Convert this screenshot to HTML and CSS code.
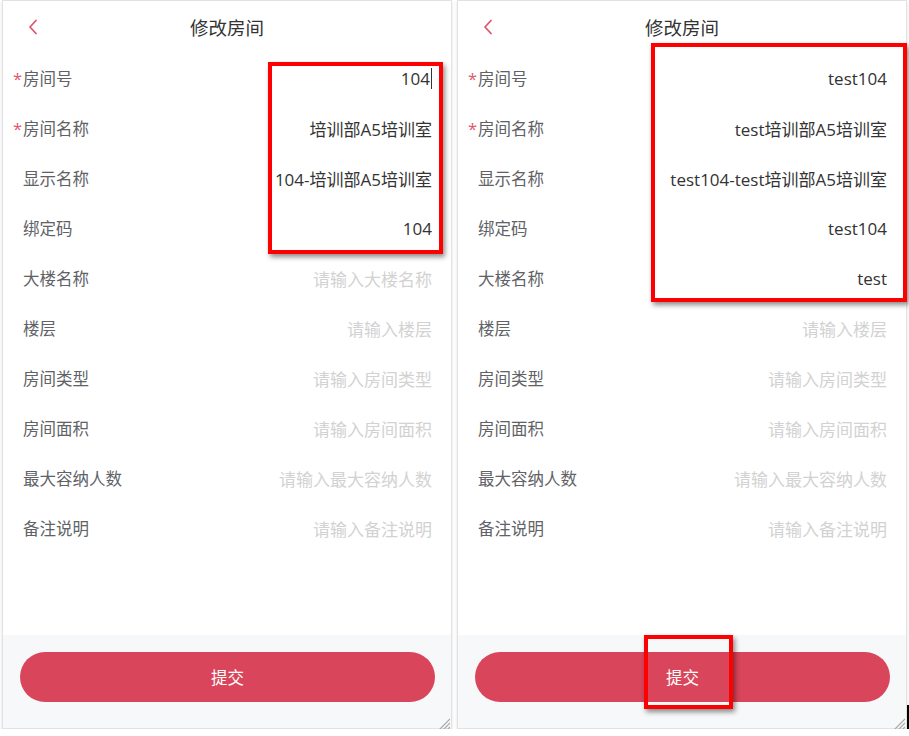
FILE: index.html
```html
<!DOCTYPE html>
<html lang="zh-CN">
<head>
    <meta charset="UTF-8">
    <meta name="viewport" content="width=device-width, initial-scale=1.0">
    <title>修改房间</title>
    <link rel="stylesheet" href="styles.css">
</head>
<body>
    <div class="screens">
        <!-- 编辑前 -->
        <section class="phone">
            <header class="nav-bar">
                <span class="nav-back">
                    <svg width="10" height="16" viewBox="0 0 10 16"><polyline points="8,1.5 2,8 8,14.5" fill="none" stroke="#e0566b" stroke-width="1.8" stroke-linecap="round" stroke-linejoin="round"/></svg>
                </span>
                <h1 class="nav-title">修改房间</h1>
                <span></span>
            </header>
            <div class="form">
                <div class="field">
                    <label class="field-label"><span class="req">*</span>房间号</label>
                    <div class="field-value">104<span class="caret"></span></div>
                </div>
                <div class="field">
                    <label class="field-label"><span class="req">*</span>房间名称</label>
                    <div class="field-value">培训部A5培训室</div>
                </div>
                <div class="field">
                    <label class="field-label"><span class="req"></span>显示名称</label>
                    <div class="field-value">104-培训部A5培训室</div>
                </div>
                <div class="field">
                    <label class="field-label"><span class="req"></span>绑定码</label>
                    <div class="field-value">104</div>
                </div>
                <div class="field">
                    <label class="field-label"><span class="req"></span>大楼名称</label>
                    <div class="field-value empty">请输入大楼名称</div>
                </div>
                <div class="field">
                    <label class="field-label"><span class="req"></span>楼层</label>
                    <div class="field-value empty">请输入楼层</div>
                </div>
                <div class="field">
                    <label class="field-label"><span class="req"></span>房间类型</label>
                    <div class="field-value empty">请输入房间类型</div>
                </div>
                <div class="field">
                    <label class="field-label"><span class="req"></span>房间面积</label>
                    <div class="field-value empty">请输入房间面积</div>
                </div>
                <div class="field">
                    <label class="field-label"><span class="req"></span>最大容纳人数</label>
                    <div class="field-value empty">请输入最大容纳人数</div>
                </div>
                <div class="field">
                    <label class="field-label"><span class="req"></span>备注说明</label>
                    <div class="field-value empty">请输入备注说明</div>
                </div>
            </div>
            <footer class="submit-bar">
                <button class="submit-btn">提交</button>
            </footer>
            <span class="resize-grip">
                <svg width="13" height="13" viewBox="0 0 13 13"><path d="M13 1L1 13M13 5L5 13M13 9L9 13" stroke="#a8a8a8" stroke-width="1.2"/></svg>
            </span>
            <div class="mark mark-values"></div>
        </section>

        <!-- 编辑后 -->
        <section class="phone">
            <header class="nav-bar">
                <span class="nav-back">
                    <svg width="10" height="16" viewBox="0 0 10 16"><polyline points="8,1.5 2,8 8,14.5" fill="none" stroke="#e0566b" stroke-width="1.8" stroke-linecap="round" stroke-linejoin="round"/></svg>
                </span>
                <h1 class="nav-title">修改房间</h1>
                <span></span>
            </header>
            <div class="form">
                <div class="field">
                    <label class="field-label"><span class="req">*</span>房间号</label>
                    <div class="field-value">test104</div>
                </div>
                <div class="field">
                    <label class="field-label"><span class="req">*</span>房间名称</label>
                    <div class="field-value">test培训部A5培训室</div>
                </div>
                <div class="field">
                    <label class="field-label"><span class="req"></span>显示名称</label>
                    <div class="field-value">test104-test培训部A5培训室</div>
                </div>
                <div class="field">
                    <label class="field-label"><span class="req"></span>绑定码</label>
                    <div class="field-value">test104</div>
                </div>
                <div class="field">
                    <label class="field-label"><span class="req"></span>大楼名称</label>
                    <div class="field-value">test</div>
                </div>
                <div class="field">
                    <label class="field-label"><span class="req"></span>楼层</label>
                    <div class="field-value empty">请输入楼层</div>
                </div>
                <div class="field">
                    <label class="field-label"><span class="req"></span>房间类型</label>
                    <div class="field-value empty">请输入房间类型</div>
                </div>
                <div class="field">
                    <label class="field-label"><span class="req"></span>房间面积</label>
                    <div class="field-value empty">请输入房间面积</div>
                </div>
                <div class="field">
                    <label class="field-label"><span class="req"></span>最大容纳人数</label>
                    <div class="field-value empty">请输入最大容纳人数</div>
                </div>
                <div class="field">
                    <label class="field-label"><span class="req"></span>备注说明</label>
                    <div class="field-value empty">请输入备注说明</div>
                </div>
            </div>
            <footer class="submit-bar">
                <button class="submit-btn">提交</button>
            </footer>
            <span class="resize-grip">
                <svg width="13" height="13" viewBox="0 0 13 13"><path d="M13 1L1 13M13 5L5 13M13 9L9 13" stroke="#a8a8a8" stroke-width="1.2"/></svg>
            </span>
            <div class="mark mark-fields"></div>
            <div class="mark mark-submit"></div>
            <span class="pointer-line"></span>
        </section>
    </div>
</body>
</html>
```

FILE: styles.css
```css
body {
    margin: 0;
    background-color: #ffffff;
    font-family: "Open Sans", "Noto Sans CJK SC", sans-serif;
    color: #333;
}
.screens {
    display: flex;
    gap: 5px;
    padding-left: 2px;
}
.phone {
    position: relative;
    width: 450px;
    height: 729px;
    box-sizing: border-box;
    border: 1px solid #e2e2e2;
    box-shadow: 0 2px 3px rgba(0, 0, 0, 0.12);
    background-color: #fff;
    display: flex;
    flex-direction: column;
}

/* 顶部导航 */
.nav-bar {
    height: 52px;
    display: grid;
    grid-template-columns: 1fr auto 1fr;
    align-items: center;
}
.nav-back {
    padding-left: 25px;
    display: flex;
    align-items: center;
}
.nav-title {
    margin: 0;
    font-size: 18.5px;
    font-weight: 400;
    color: #333;
    font-family: "Noto Sans CJK SC", sans-serif;
}

/* 表单 */
.form {
    flex: 1;
}
.field {
    height: 50px;
    display: flex;
    align-items: center;
    justify-content: space-between;
    padding: 0 19px 0 10px;
    font-size: 16.5px;
}
.field-label {
    display: flex;
    align-items: center;
    color: #606266;
    white-space: nowrap;
}
.req {
    display: inline-block;
    width: 10px;
    color: #e0566b;
}
.field-value {
    display: flex;
    align-items: center;
    font-size: 17px;
    color: #333;
    white-space: nowrap;
}
.field-value.empty {
    color: #d2d2d2;
}
.caret {
    display: inline-block;
    width: 1px;
    height: 21px;
    margin-left: 1px;
    background-color: #333;
}

/* 底部提交 */
.submit-bar {
    height: 93px;
    box-sizing: border-box;
    padding: 17px 16px 0 17px;
    background-color: #f7f8fa;
}
.submit-btn {
    width: 100%;
    height: 50px;
    border: none;
    border-radius: 25px;
    background-color: #d9455a;
    color: #fff;
    font-size: 16.5px;
    font-family: "Noto Sans CJK SC", sans-serif;
}
.resize-grip {
    position: absolute;
    right: 1px;
    bottom: 1px;
    width: 13px;
    height: 13px;
}

/* 标注框 */
.mark {
    position: absolute;
    border: 4px solid #ff0000;
    box-shadow: 2px 3px 5px rgba(0, 0, 0, 0.45);
    box-sizing: border-box;
}
.mark-values {
    left: 265px;
    top: 61px;
    width: 175px;
    height: 192px;
}
.mark-fields {
    left: 193px;
    top: 42px;
    width: 256px;
    height: 259px;
}
.mark-submit {
    left: 186px;
    top: 634px;
    width: 89px;
    height: 74px;
}
.pointer-line {
    position: absolute;
    right: -3px;
    top: 704px;
    width: 2px;
    height: 32px;
    background-color: #000;
}
```
